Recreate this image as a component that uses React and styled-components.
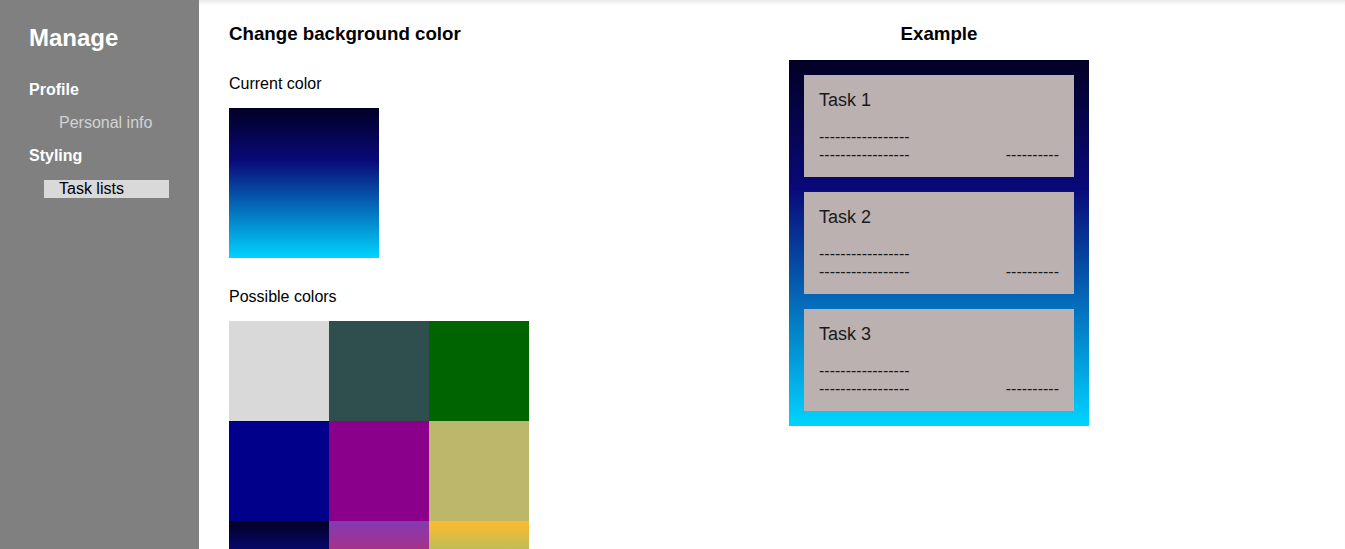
import styled, { createGlobalStyle } from "styled-components"

const GlobalStyle = createGlobalStyle`
    body {
        margin: 0;
        font-family: "Liberation Sans", Arial, sans-serif;
        background: white;
    }
`

const gradient = "linear-gradient(180deg, #020024 0%, #090979 35%, #00d4ff 100%)"

const Page = styled.div`
    display: flex;
    height: 100vh;
    overflow: hidden;
`

const Sidebar = styled.nav`
    width: 199px;
    flex-shrink: 0;
    background: #808080;
    padding: 24px 0 0 29px;
    box-sizing: border-box;
`
const SidebarTitle = styled.h1`
    margin: 0 0 29px 0;
    font-size: 24px;
    line-height: 28px;
    color: white;
    font-weight: bold;
`
const NavList = styled.ul`
    list-style: none;
    margin: 0;
    padding: 0;
    display: flex;
    flex-direction: column;
    gap: 15px;
`
const NavGroup = styled.li`
    font-size: 16px;
    line-height: 18px;
    font-weight: bold;
    color: white;
`
const NavItem = styled.li`
    font-size: 16px;
    line-height: 18px;
    margin-left: 15px;
    padding-left: 15px;
    width: 110px;
    color: ${(p) => (p.$active ? "black" : "#d3d3d3")};
    background: ${(p) => (p.$active ? "#d9d9d9" : "transparent")};
`

const Main = styled.main`
    flex: 1;
    display: flex;
    padding: 23px 0 0 30px;
    box-shadow: inset 0 5px 6px -5px rgba(0, 0, 0, 0.18);
`
const LeftColumn = styled.section`
    width: 560px;
    flex-shrink: 0;
`
const RightColumn = styled.section`
    width: 300px;
`
const Heading = styled.h3`
    margin: 0;
    font-size: 18.72px;
    line-height: 21px;
    font-weight: bold;
    color: black;
    text-align: ${(p) => (p.$center ? "center" : "left")};
`
const Label = styled.p`
    margin: ${(p) => p.$top}px 0 15px 0;
    font-size: 16px;
    line-height: 18px;
    color: black;
`
const Swatch = styled.div`
    width: ${(p) => p.$size}px;
    height: ${(p) => p.$size}px;
    background: ${(p) => p.$bg};
`
const SwatchGrid = styled.div`
    display: grid;
    grid-template-columns: repeat(3, 100px);
`

const ExampleBox = styled.div`
    margin-top: 16px;
    background: ${gradient};
    padding: 15px;
    display: flex;
    flex-direction: column;
    gap: 15px;
`
const Card = styled.div`
    height: 102px;
    box-sizing: border-box;
    background: #bab1b0;
    padding: 15px 15px 0 15px;
    color: #1a1a1a;
`
const CardTitle = styled.div`
    font-size: 18px;
    line-height: 21px;
    margin-bottom: 17px;
`
const CardLine = styled.div`
    display: flex;
    justify-content: space-between;
    font-size: 16px;
    line-height: 18px;
`

const colors = [
    "#d9d9d9",
    "#2f4f4f",
    "#006400",
    "#00008b",
    "#8b008b",
    "#bdb76b",
    gradient,
    "linear-gradient(180deg, #833ab4 0%, #fd1d1d 100%)",
    "linear-gradient(180deg, #fdbb2d 0%, #22c1c3 100%)",
]

const tasks = ["Task 1", "Task 2", "Task 3"]

const App = () => {
    return (
        <Page>
            <GlobalStyle />
            <Sidebar>
                <SidebarTitle>Manage</SidebarTitle>
                <NavList>
                    <NavGroup>Profile</NavGroup>
                    <NavItem>Personal info</NavItem>
                    <NavGroup>Styling</NavGroup>
                    <NavItem $active>Task lists</NavItem>
                </NavList>
            </Sidebar>
            <Main>
                <LeftColumn>
                    <Heading>Change background color</Heading>
                    <Label $top={31}>Current color</Label>
                    <Swatch $size={150} $bg={gradient} />
                    <Label $top={30}>Possible colors</Label>
                    <SwatchGrid>
                        {colors.map((c, i) => (
                            <Swatch key={i} $size={100} $bg={c} />
                        ))}
                    </SwatchGrid>
                </LeftColumn>
                <RightColumn>
                    <Heading $center>Example</Heading>
                    <ExampleBox>
                        {tasks.map((t) => (
                            <Card key={t}>
                                <CardTitle>{t}</CardTitle>
                                <CardLine>
                                    <span>-----------------</span>
                                </CardLine>
                                <CardLine>
                                    <span>-----------------</span>
                                    <span>----------</span>
                                </CardLine>
                            </Card>
                        ))}
                    </ExampleBox>
                </RightColumn>
            </Main>
        </Page>
    )
}

export default App
